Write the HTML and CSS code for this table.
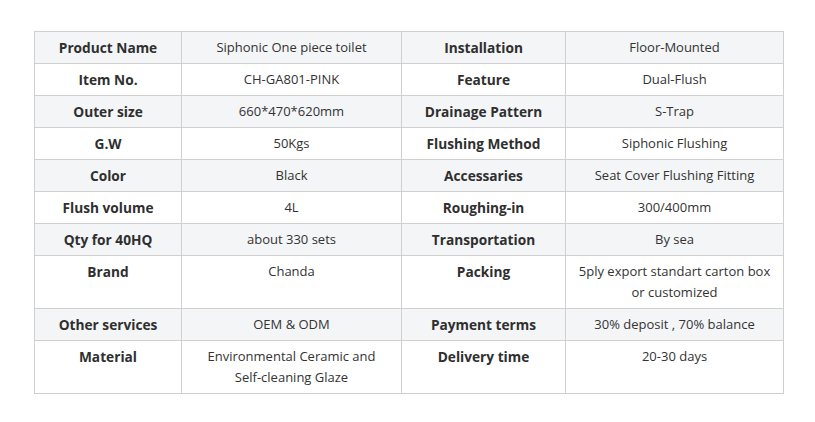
FILE: index.html
```html
<!DOCTYPE html>
<html>
<head>
<meta charset="utf-8">
<link rel="stylesheet" href="styles.css">
</head>
<body>
<div class="page">
<table class="spec">
  <colgroup>
    <col class="c1"><col class="c2"><col class="c3"><col class="c4">
  </colgroup>
  <tbody>
    <tr><th>Product Name</th><td>Siphonic One piece toilet</td><th>Installation</th><td>Floor-Mounted</td></tr>
    <tr><th>Item No.</th><td>CH-GA801-PINK</td><th>Feature</th><td>Dual-Flush</td></tr>
    <tr><th>Outer size</th><td>660*470*620mm</td><th>Drainage Pattern</th><td>S-Trap</td></tr>
    <tr><th>G.W</th><td>50Kgs</td><th>Flushing Method</th><td>Siphonic Flushing</td></tr>
    <tr><th>Color</th><td>Black</td><th>Accessaries</th><td>Seat Cover Flushing Fitting</td></tr>
    <tr><th>Flush volume</th><td>4L</td><th>Roughing-in</th><td>300/400mm</td></tr>
    <tr><th>Qty for 40HQ</th><td>about 330 sets</td><th>Transportation</th><td>By sea</td></tr>
    <tr><th>Brand</th><td>Chanda</td><th>Packing</th><td>5ply export standart carton box<br>or customized</td></tr>
    <tr><th>Other services</th><td>OEM &amp; ODM</td><th>Payment terms</th><td>30% deposit , 70% balance</td></tr>
    <tr><th>Material</th><td>Environmental Ceramic and<br>Self-cleaning Glaze</td><th>Delivery time</th><td>20-30 days</td></tr>
  </tbody>
</table>
</div>
</body>
</html>
```
FILE: styles.css
```css
html, body {
  margin: 0;
  padding: 0;
  background: #ffffff;
}
.page {
  padding: 31px 0 0 34px;
}
.spec {
  border-collapse: collapse;
  width: 749px;
  table-layout: fixed;
  font-family: "Open Sans", "Noto Sans", sans-serif;
  font-size: 13px;
  line-height: 21px;
  color: #333333;
}
.c1 { width: 147px; }
.c2 { width: 220px; }
.c3 { width: 164px; }
.c4 { width: 218px; }
.spec th, .spec td {
  border: 1px solid #d0d0d0;
  padding: 5px 4px;
  text-align: center;
  vertical-align: top;
}
.spec th {
  font-weight: 700;
  font-size: 13.7px;
  color: #2f2f2f;
}
.spec td {
  font-weight: 400;
}
.spec tr:nth-child(odd) {
  background: #f4f5f7;
}
```
